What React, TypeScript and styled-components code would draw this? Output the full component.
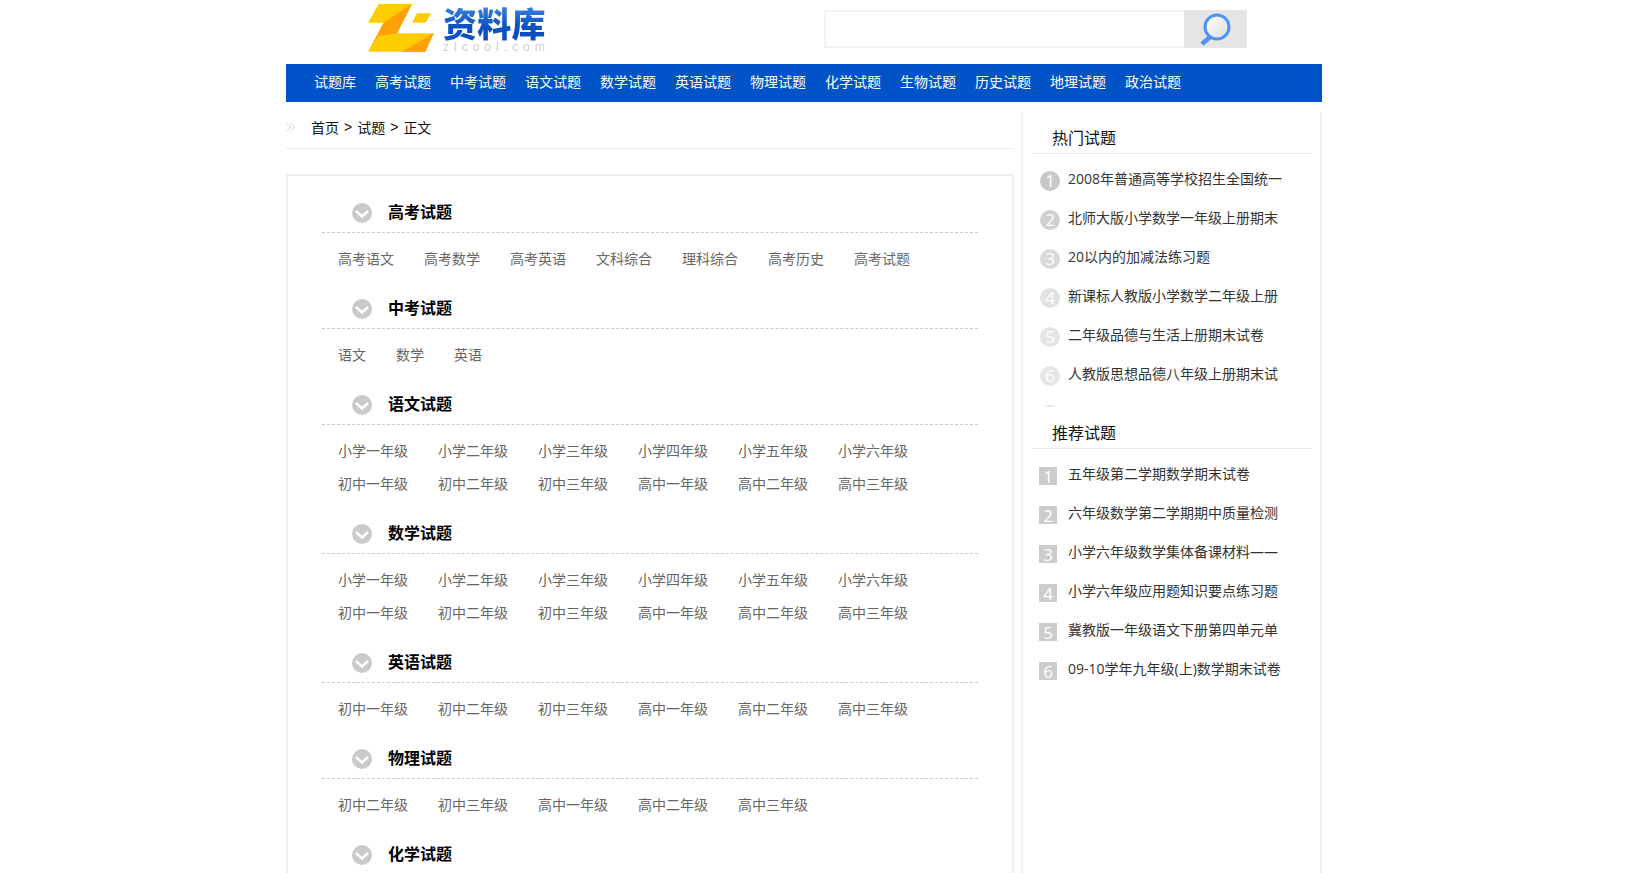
import React from "react";
import styled, { createGlobalStyle } from "styled-components";

const navItems = ["试题库", "高考试题", "中考试题", "语文试题", "数学试题", "英语试题", "物理试题", "化学试题", "生物试题", "历史试题", "地理试题", "政治试题"];

const primaryGrades = ["小学一年级", "小学二年级", "小学三年级", "小学四年级", "小学五年级", "小学六年级"];
const middleGrades = ["初中一年级", "初中二年级", "初中三年级", "高中一年级", "高中二年级", "高中三年级"];

const sections = [
  { title: "高考试题", links: ["高考语文", "高考数学", "高考英语", "文科综合", "理科综合", "高考历史", "高考试题"] },
  { title: "中考试题", links: ["语文", "数学", "英语"] },
  { title: "语文试题", links: [...primaryGrades, ...middleGrades] },
  { title: "数学试题", links: [...primaryGrades, ...middleGrades] },
  { title: "英语试题", links: middleGrades },
  { title: "物理试题", links: middleGrades.slice(1, 6) },
  { title: "化学试题", links: [] as string[] },
];

const hotList = [
  "2008年普通高等学校招生全国统一",
  "北师大版小学数学一年级上册期末",
  "20以内的加减法练习题",
  "新课标人教版小学数学二年级上册",
  "二年级品德与生活上册期末试卷",
  "人教版思想品德八年级上册期末试",
];

const recommendList = [
  "五年级第二学期数学期末试卷",
  "六年级数学第二学期期中质量检测",
  "小学六年级数学集体备课材料——",
  "小学六年级应用题知识要点练习题",
  "冀教版一年级语文下册第四单元单",
  "09-10学年九年级(上)数学期末试卷",
];

const hotBadgeColors = ["#c8c8c8", "#d0d0d0", "#d9d9d9", "#e2e2e2", "#e4e4e4", "#e6e6e6", "#e6e6e6"];

const App: React.FC = () => {
  return (
    <Page>
      <GlobalStyle />
      <Wrap>
        <Header>
          <Logo>
            <svg width="78" height="56" viewBox="0 0 234 168">
              <polygon points="50,12 150,12 105,100 215,100 190,155 18,155 48,100 65,68 18,68" fill="#ffcc00" />
              <polygon points="150,12 105,100 48,108 20,155 48,100 65,68" fill="#ff9f0a" />
              <polygon points="215,100 190,155 120,155" fill="#ff9f0a" />
              <polygon points="165,40 208,40 190,68 150,68" fill="#ffcc00" />
            </svg>
            <LogoText>
              <LogoName>资料库</LogoName>
              <LogoDomain>zlcool.com</LogoDomain>
            </LogoText>
          </Logo>
          <Search>
            <SearchInput />
            <SearchButton>
              <svg width="34" height="36" viewBox="0 0 34 36">
                <defs>
                  <linearGradient id="lens" x1="0" y1="0" x2="1" y2="1">
                    <stop offset="0" stopColor="#ffffff" />
                    <stop offset="1" stopColor="#dddddd" />
                  </linearGradient>
                </defs>
                <line x1="13" y1="26" x2="5" y2="33" stroke="#4d94f5" strokeWidth="4.5" />
                <circle cx="20" cy="16" r="12" fill="url(#lens)" stroke="#4d94f5" strokeWidth="3" />
              </svg>
            </SearchButton>
          </Search>
        </Header>
        <Nav>
          {navItems.map((item) => (
            <NavLink key={item}>{item}</NavLink>
          ))}
        </Nav>
        <Body>
          <MainColumn>
            <Breadcrumb>
              <CrumbIcon>
                <svg width="10" height="10" viewBox="0 0 10 10">
                  <path d="M0.5 0.5 L4.5 5 L0.5 9.5 M4.5 0.5 L8.5 5 L4.5 9.5" fill="none" stroke="#d5d5d5" strokeWidth="1" />
                </svg>
              </CrumbIcon>
              <span>首页</span>
              <CrumbSep>&gt;</CrumbSep>
              <span>试题</span>
              <CrumbSep>&gt;</CrumbSep>
              <span>正文</span>
            </Breadcrumb>
            <Panel>
              {sections.map((section) => (
                <Section key={section.title}>
                  <SectionHead>
                    <svg width="20" height="20" viewBox="0 0 20 20">
                      <circle cx="10" cy="10" r="10" fill="#cacaca" />
                      <path d="M4 8 L10 13.5 L16 8" fill="none" stroke="#fff" strokeWidth="2.4" />
                    </svg>
                    <SectionTitle>{section.title}</SectionTitle>
                  </SectionHead>
                  {section.links.length > 0 && (
                    <LinkGrid>
                      {section.links.map((link, i) => (
                        <SectionLink key={i}>{link}</SectionLink>
                      ))}
                    </LinkGrid>
                  )}
                </Section>
              ))}
            </Panel>
          </MainColumn>
          <Sidebar>
            <SideTitle>热门试题</SideTitle>
            <SideList clipped>
              {hotList.map((item, i) => (
                <SideRow key={item}>
                  <RoundBadge color={hotBadgeColors[i]}>{i + 1}</RoundBadge>
                  <SideText>{item}</SideText>
                </SideRow>
              ))}
              <SideRow>
                <RoundBadge color={hotBadgeColors[6]} />
              </SideRow>
            </SideList>
            <SideTitle>推荐试题</SideTitle>
            <SideList>
              {recommendList.map((item, i) => (
                <SideRow key={item}>
                  <SquareBadge>{i + 1}</SquareBadge>
                  <SideText>{item}</SideText>
                </SideRow>
              ))}
            </SideList>
          </Sidebar>
        </Body>
      </Wrap>
    </Page>
  );
};

const GlobalStyle = createGlobalStyle`
  html, body {
    margin: 0;
    padding: 0;
    background: #fff;
    overflow: hidden;
  }
  body {
    font-family: "Noto Sans CJK SC", "Liberation Sans", sans-serif;
    font-size: 14px;
  }
`;

const Page = styled.div`
  height: 873px;
  overflow: hidden;
`;

const Wrap = styled.div`
  width: 1036px;
  margin-left: 286px;
`;

const Header = styled.div`
  height: 64px;
  display: flex;
`;

const Logo = styled.div`
  display: flex;
  gap: 3px;
  margin-left: 76px;
`;

const LogoText = styled.div`
  padding-top: 5px;
  width: 110px;
`;

const LogoName = styled.div`
  font-size: 34px;
  line-height: 36px;
  font-weight: 900;
  white-space: nowrap;
  letter-spacing: 0.3px;
  background: linear-gradient(180deg, #3f86e0 0%, #0a50bf 60%, #0a50bf 100%);
  -webkit-background-clip: text;
  background-clip: text;
  color: transparent;
`;

const LogoDomain = styled.div`
  margin-top: 1px;
  font-family: "Liberation Sans", sans-serif;
  font-size: 12px;
  line-height: 10px;
  letter-spacing: 5px;
  color: #cfcfcf;
  white-space: nowrap;
`;

const Search = styled.div`
  margin: 10px 75px 0 auto;
  display: flex;
  height: 38px;
`;

const SearchInput = styled.div`
  width: 358px;
  border: 2px solid #f3f3f3;
  border-right: 0;
  background: #fff;
`;

const SearchButton = styled.div`
  width: 63px;
  background: #e5e5e5;
  display: flex;
  align-items: center;
  padding-left: 13px;
  box-sizing: border-box;
`;

const Nav = styled.div`
  height: 38px;
  background: #0153c7;
  display: flex;
  align-items: center;
  gap: 19px;
  padding-left: 28px;
`;

const NavLink = styled.a`
  color: #fff;
  font-size: 14px;
  line-height: 34px;
  padding-bottom: 4px;
  white-space: nowrap;
`;

const Body = styled.div`
  display: flex;
  align-items: flex-start;
  margin-top: 10px;
`;

const MainColumn = styled.div`
  width: 728px;
  flex: none;
`;

const Breadcrumb = styled.div`
  height: 37px;
  box-sizing: border-box;
  padding-bottom: 7px;
  border-bottom: 1px solid #ececec;
  display: flex;
  align-items: center;
  color: #111;
  font-size: 14px;
`;

const CrumbIcon = styled.span`
  width: 25px;
  height: 10px;
  line-height: 0;
`;

const CrumbSep = styled.span`
  margin: 0 5px;
  font-family: "Liberation Sans", sans-serif;
`;

const Panel = styled.div`
  margin-top: 25px;
  border: 2px solid #f1f1f1;
  padding: 17px 34px 0;
  box-sizing: border-box;
`;

const Section = styled.div`
  padding-bottom: 14px;
`;

const SectionHead = styled.div`
  height: 39px;
  border-bottom: 1px dashed #cccccc;
  padding-left: 30px;
  display: flex;
  align-items: center;
  gap: 16px;
`;

const SectionTitle = styled.h3`
  margin: 0;
  padding-bottom: 4px;
  font-size: 16px;
  line-height: 24px;
  font-weight: 700;
  color: #000;
`;

const LinkGrid = styled.div`
  display: flex;
  flex-wrap: wrap;
  padding: 9px 16px 0;
  gap: 0 30px;
`;

const SectionLink = styled.a`
  color: #666;
  font-size: 14px;
  line-height: 33px;
  white-space: nowrap;
`;

const Sidebar = styled.div`
  width: 301px;
  margin-left: 7px;
  flex: none;
  box-sizing: border-box;
  height: 800px;
  border-left: 2px solid #f1f1f1;
  border-right: 2px solid #f1f1f1;
  padding: 0 8px 0 9px;
`;

const SideTitle = styled.h3`
  margin: 0;
  padding: 13px 0 4px 20px;
  font-size: 16px;
  line-height: 24px;
  font-weight: 400;
  color: #111;
  border-bottom: 1px solid #ececec;
`;

const SideList = styled.div<{ clipped?: boolean }>`
  padding-top: 7px;
  ${({ clipped }) => clipped && `height: 253px; overflow: hidden; box-sizing: border-box;`}
`;

const SideRow = styled.div`
  height: 39px;
  display: flex;
  align-items: center;
`;

const RoundBadge = styled.span<{ color: string }>`
  width: 20px;
  height: 20px;
  margin: 0 8px;
  flex: none;
  border-radius: 50%;
  background: ${({ color }) => color};
  color: #fff;
  font-family: "Open Sans", sans-serif;
  font-size: 17px;
  line-height: 20px;
  text-align: center;
`;

const SquareBadge = styled.span`
  width: 18px;
  height: 18px;
  margin: 0 11px 0 7px;
  flex: none;
  background: #cccccc;
  color: #fff;
  font-family: "Open Sans", sans-serif;
  font-size: 17px;
  line-height: 19px;
  text-align: center;
`;

const SideText = styled.span`
  color: #333;
  font-family: "Open Sans", "Noto Sans CJK SC", sans-serif;
  font-size: 14px;
  line-height: 20px;
  padding-bottom: 3px;
  white-space: nowrap;
`;

export default App;
